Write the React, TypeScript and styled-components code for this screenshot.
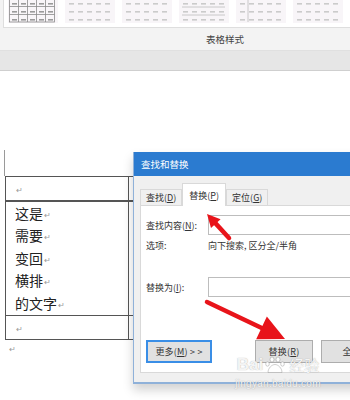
import React from 'react';
import styled, { createGlobalStyle } from 'styled-components';

const GlobalStyle = createGlobalStyle`
  html, body {
    margin: 0;
    padding: 0;
    background: #ffffff;
  }
  body {
    font-family: 'Noto Sans CJK SC', 'Noto Sans', sans-serif;
  }
`;

const Screen = styled.div`
  position: relative;
  width: 350px;
  height: 400px;
  overflow: hidden;
  background: #ffffff;
`;

/* ---------- ribbon ---------- */

const Ribbon = styled.div`
  height: 71px;
  display: flex;
  flex-direction: column;
  background: #f3f3f3;
`;

const GalleryPanel = styled.div`
  height: 27px;
  margin-left: 3px;
  background: #ffffff;
  border-left: 1px solid #dedede;
  border-bottom: 1px solid #dedede;
  display: flex;
  gap: 7px;
  padding-left: 4px;
  overflow: hidden;
`;

const Thumb = styled.div`
  flex: 0 0 50px;
  height: 23px;
  background: #f8f5f8;
`;

const GroupLabel = styled.div`
  height: 22px;
  display: flex;
  align-items: center;
  justify-content: center;
  padding-left: 100px;
  font-size: 9.5px;
  color: #444;
`;

const RibbonBand = styled.div`
  flex: 1;
  background: #e6e6e6;
  border-top: 1px solid #e0e0e0;
  border-bottom: 1px solid #cfcfcf;
`;

/* ---------- document ---------- */

const Page = styled.div`
  position: relative;
  padding: 79px 0 0 5px;
`;

const MarginMark = styled.div`
  width: 0;
  height: 26px;
  margin-left: -1px;
  border-left: 1px solid #9a9a9a;
`;

const DocTable = styled.table`
  border-collapse: collapse;
  width: 230px;
  table-layout: fixed;
  font-size: 14px;
  color: #222;
`;

const Cell = styled.td<{ $h: number; $wide?: boolean }>`
  height: ${p => p.$h}px;
  box-sizing: border-box;
  padding: 0 0 0 9px;
  border: 1px solid #555;
  border-bottom-width: ${p => (p.$wide ? 2 : 1)}px;
  vertical-align: top;
  line-height: 22.6px;
  overflow: hidden;
`;

const TextLine = styled.div`
  height: 22.6px;
  white-space: nowrap;
`;

const Mark = styled.span`
  font-size: 8px;
  line-height: 0;
  color: #999;
  margin-left: 1px;
  position: relative;
  top: -1px;
`;

const TrailingMark = styled.div`
  padding: 4px 0 0 4px;
  font-size: 8px;
  line-height: 10px;
  color: #999;
`;

/* ---------- dialog ---------- */

const Dialog = styled.div`
  position: absolute;
  left: 133px;
  top: 152px;
  width: 240px;
  height: 230px;
  background: #f0f0f0;
  border-left: 1px solid #8fb1d9;
  border-bottom: 2px solid #8fb1d9;
  box-shadow: 0 6px 10px rgba(0, 0, 0, 0.18);
  display: flex;
  flex-direction: column;
  font-size: 9px;
  color: #333;
`;

const TitleBar = styled.div`
  height: 24px;
  background: #2b7bd0;
  color: #ffffff;
  font-size: 9.5px;
  display: flex;
  align-items: center;
  padding-left: 7px;
`;

const DialogBody = styled.div`
  flex: 1;
  padding: 7px 0 9px 6px;
  display: flex;
  flex-direction: column;
`;

const Tabs = styled.div`
  display: flex;
  align-items: flex-end;
  height: 22px;
`;

const Tab = styled.div<{ $active?: boolean }>`
  height: ${p => (p.$active ? 22 : 15)}px;
  padding: 0 ${p => (p.$active ? 6 : 5)}px;
  display: flex;
  align-items: center;
  background: ${p => (p.$active ? '#ffffff' : '#f0f0f0')};
  border: 1px solid #d9d9d9;
  border-bottom: none;
  margin-bottom: ${p => (p.$active ? -1 : 0)}px;
  position: relative;
  z-index: ${p => (p.$active ? 1 : 0)};
`;

const TabPanel = styled.div`
  flex: 1;
  background: #ffffff;
  border: 1px solid #d9d9d9;
  border-right: none;
  padding: 9px 0 0 5px;
  display: flex;
  flex-direction: column;
`;

const FieldRow = styled.div<{ $mt?: number }>`
  display: flex;
  align-items: center;
  height: 20px;
  margin-top: ${p => p.$mt ?? 0}px;
`;

const FieldLabel = styled.div`
  width: 62px;
  flex: 0 0 62px;
`;

const Input = styled.div`
  flex: 1;
  height: 20px;
  box-sizing: border-box;
  background: #ffffff;
  border: 1px solid #bdbdbd;
  border-right: none;
`;

const Buttons = styled.div`
  margin-top: auto;
  margin-bottom: 9px;
  display: flex;
  gap: 8px;
`;

const Button = styled.div<{ $w: number; $focus?: boolean; $gapLeft?: number }>`
  width: ${p => p.$w}px;
  height: 23px;
  box-sizing: border-box;
  flex: 0 0 auto;
  display: flex;
  align-items: center;
  justify-content: center;
  background: #e1e1e1;
  border: ${p => (p.$focus ? '2px solid #3a8ee6' : '1px solid #adadad')};
  margin-left: ${p => p.$gapLeft ?? 0}px;
  letter-spacing: 0.2px;
  white-space: nowrap;
`;

const U = styled.span`
  text-decoration: underline;
`;

/* ---------- overlays ---------- */

const Overlay = styled.svg`
  position: absolute;
  left: 0;
  top: 0;
  pointer-events: none;
`;

const Watermark = styled.div`
  position: absolute;
  left: 232px;
  top: 356px;
  width: 92px;
  display: flex;
  flex-direction: column;
  align-items: center;
  color: rgba(255, 255, 255, 0.9);
  text-shadow: 0 0 1px rgba(120, 120, 120, 0.7);
  pointer-events: none;
`;

const WmTop = styled.div`
  display: flex;
  align-items: center;
  font-family: 'Liberation Sans', Arial, sans-serif;
  font-size: 17px;
  font-weight: 700;
  line-height: 18px;
`;

const WmCn = styled.span`
  font-family: 'Noto Sans CJK SC', sans-serif;
  font-size: 15px;
  font-weight: 400;
`;

const WmUrl = styled.div`
  font-family: 'Liberation Sans', Arial, sans-serif;
  font-size: 10px;
  line-height: 11px;
  letter-spacing: 0.3px;
  margin-top: 4px;
`;

function Thumbnail({ kind }: { kind: number }) {
  const dark = kind === 0;
  const dash = dark ? '#9a9a9a' : '#cbcbcb';
  const cols = [0, 1, 2, 3, 4];
  const rows = [3, 11, 19];
  return (
    <Thumb>
      <svg width="50" height="23" viewBox="0 0 50 23">
        {dark && (
          <g stroke="#8a8a8a" strokeWidth="0.8" fill="none">
            <rect x="1.5" y="-1" width="45" height="23" />
            {[1, 2, 3, 4].map(i => (
              <line key={i} x1={1.5 + i * 9} y1="0" x2={1.5 + i * 9} y2="22" />
            ))}
            <line x1="1.5" y1="6.5" x2="46.5" y2="6.5" />
            <line x1="1.5" y1="14.5" x2="46.5" y2="14.5" />
          </g>
        )}
        {kind === 3 && (
          <g stroke="#bdbdbd" strokeWidth="0.8">
            <line x1="3" y1="7" x2="46" y2="7" />
            <line x1="3" y1="15" x2="46" y2="15" />
          </g>
        )}
        {kind === 4 && <line x1="12" y1="0" x2="12" y2="22" stroke="#bdbdbd" strokeWidth="0.8" />}
        {rows.map(y =>
          cols.map(c => (
            <rect key={`${y}-${c}`} x={4 + c * 9} y={y} width="5" height="1.6" fill={dash} />
          ))
        )}
      </svg>
    </Thumb>
  );
}

function Arrow({ x1, y1, x2, y2, head, width, stroke }: { x1: number; y1: number; x2: number; y2: number; head: number; width: number; stroke: number }) {
  const dx = x2 - x1;
  const dy = y2 - y1;
  const len = Math.hypot(dx, dy);
  const ux = dx / len;
  const uy = dy / len;
  const bx = x2 - ux * head;
  const by = y2 - uy * head;
  const px = -uy * (width / 2);
  const py = ux * (width / 2);
  return (
    <g fill="#e8141a" stroke="none">
      <line x1={x1} y1={y1} x2={bx + ux * 2} y2={by + uy * 2} stroke="#e8141a" strokeWidth={stroke} strokeLinecap="round" />
      <polygon points={`${x2},${y2} ${bx + px},${by + py} ${bx - px},${by - py}`} />
    </g>
  );
}

function Paw() {
  return (
    <svg width="26" height="18" viewBox="0 0 26 18">
      <g fill="rgba(255,255,255,0.92)" stroke="rgba(120,120,120,0.6)" strokeWidth="0.6">
        <ellipse cx="9" cy="3.5" rx="2" ry="2.5" />
        <ellipse cx="15" cy="3.5" rx="2" ry="2.5" />
        <ellipse cx="4.5" cy="8" rx="1.8" ry="2.2" />
        <ellipse cx="19.5" cy="8" rx="1.8" ry="2.2" />
        <path d="M5 16.5 C5 12 9 8.5 12 8.5 C15 8.5 19 12 19 16.5 Z" />
      </g>
    </svg>
  );
}

export default function App() {
  const lines = ['这是', '需要', '变回', '横排', '的文字'];
  return (
    <>
      <GlobalStyle />
      <Screen>
        <Ribbon>
          <GalleryPanel>
            {[0, 1, 2, 3, 4, 5, 6].map(k => (
              <Thumbnail key={k} kind={k} />
            ))}
          </GalleryPanel>
          <GroupLabel>表格样式</GroupLabel>
          <RibbonBand />
        </Ribbon>

        <Page>
          <MarginMark />
          <DocTable>
            <colgroup>
              <col style={{ width: 123 }} />
              <col />
            </colgroup>
            <tbody>
              <tr>
                <Cell $h={24} $wide>
                  <Mark>↵</Mark>
                </Cell>
                <Cell $h={24} $wide />
              </tr>
              <tr>
                <Cell $h={115}>
                  {lines.map(l => (
                    <TextLine key={l}>
                      {l}
                      <Mark>↵</Mark>
                    </TextLine>
                  ))}
                </Cell>
                <Cell $h={115} />
              </tr>
              <tr>
                <Cell $h={23}>
                  <Mark>↵</Mark>
                </Cell>
                <Cell $h={23} />
              </tr>
            </tbody>
          </DocTable>
          <TrailingMark>↵</TrailingMark>
        </Page>

        <Dialog>
          <TitleBar>查找和替换</TitleBar>
          <DialogBody>
            <Tabs>
              <Tab>
                查找(<U>D</U>)
              </Tab>
              <Tab $active>
                替换(<U>P</U>)
              </Tab>
              <Tab>
                定位(<U>G</U>)
              </Tab>
            </Tabs>
            <TabPanel>
              <FieldRow>
                <FieldLabel>
                  查找内容(<U>N</U>):
                </FieldLabel>
                <Input />
              </FieldRow>
              <FieldRow>
                <FieldLabel>选项:</FieldLabel>
                <div>向下搜索, 区分全/半角</div>
              </FieldRow>
              <FieldRow $mt={22}>
                <FieldLabel>
                  替换为(<U>I</U>):
                </FieldLabel>
                <Input />
              </FieldRow>
              <Buttons>
                <Button $w={66} $focus>
                  更多(<U>M</U>) &gt; &gt;
                </Button>
                <Button $w={58} $gapLeft={35}>
                  替换(<U>R</U>)
                </Button>
                <Button $w={92}>
                  全部替换(<U>A</U>)
                </Button>
              </Buttons>
            </TabPanel>
          </DialogBody>
        </Dialog>

        <Overlay width="350" height="400" viewBox="0 0 350 400">
          <Arrow x1={229} y1={238} x2={207} y2={214} head={13} width={13} stroke={4.5} />
          <Arrow x1={207} y1={302} x2={285} y2={339} head={26} width={25} stroke={4.5} />
        </Overlay>

        <Watermark>
          <WmTop>
            Bai
            <Paw />
            <WmCn>经验</WmCn>
          </WmTop>
          <WmUrl>jingyan.baidu.com</WmUrl>
        </Watermark>
      </Screen>
    </>
  );
}
